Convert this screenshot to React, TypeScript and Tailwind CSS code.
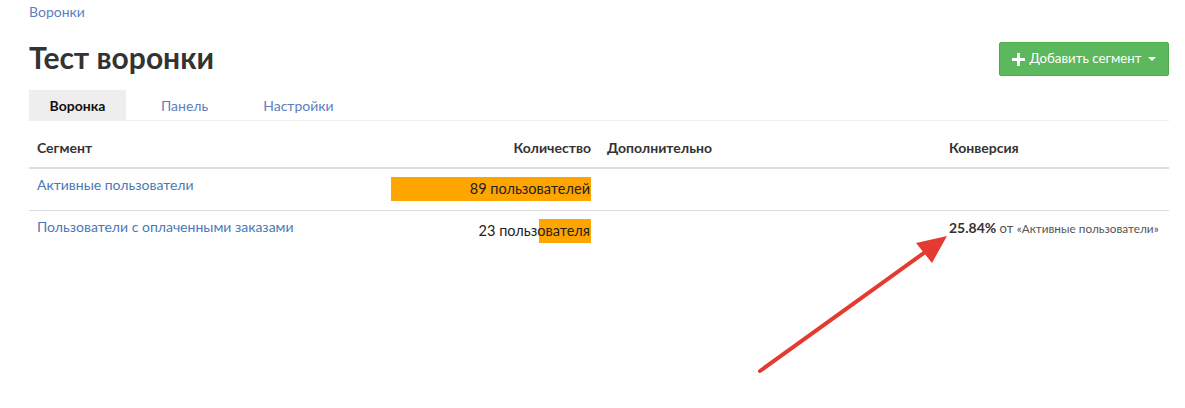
import React from 'react';

const rows = [
  { name: 'Активные пользователи', count: 89, label: '89 пользователей', conv: null as null | string },
  { name: 'Пользователи с оплаченными заказами', count: 23, label: '23 пользователя', conv: '25.84%' },
];

export default function App() {
  const max = 89;
  return (
    <div
      className="relative h-[408px] w-[1185px] bg-white text-[#333]"
      style={{ fontFamily: 'Lato, "Open Sans", sans-serif' }}
    >
      <div className="px-[29px] pr-[16px]">
        <div className="pt-[3px] text-[14px] leading-[18px] text-[#5a7fbe]">Воронки</div>

        <div className="mt-[21px] flex items-start justify-between">
          <h1 className="-mt-[3px] text-[30px] font-bold leading-[36px] text-[#333]">Тест воронки</h1>
          <button className="flex h-[34px] w-[170px] items-center justify-center gap-[4px] rounded-[2px] border border-[#4cae4c] bg-[#5cb85c] text-[13.3px] text-white">
            <svg width="13" height="13" viewBox="0 0 13 13">
              <path d="M5 0h3v5h5v3H8v5H5V8H0V5h5z" fill="white" />
            </svg>
            <span>Добавить сегмент</span>
            <svg width="8" height="5" viewBox="0 0 8 5" className="ml-[2px]">
              <path d="M0 0h8L4 4z" fill="white" />
            </svg>
          </button>
        </div>

        {/* Tabs */}
        <div className="mt-[14px] flex border-b border-[#eee] text-[14px]">
          <div className="flex h-[30px] w-[97px] items-center justify-center bg-[#eee] font-bold text-[#111]">Воронка</div>
          <div className="ml-[35px] flex h-[30px] items-center text-[#5a7fbe]">Панель</div>
          <div className="ml-[55px] flex h-[30px] items-center text-[#5a7fbe]">Настройки</div>
        </div>

        {/* Table */}
        <table className="mt-[16px] w-[1140px] table-fixed border-collapse text-[14px]">
          <colgroup>
            <col className="w-[354px]" />
            <col className="w-[216px]" />
            <col className="w-[342px]" />
            <col className="w-[228px]" />
          </colgroup>
          <thead>
            <tr className="border-b-2 border-[#ddd]">
              <th className="px-[8px] pb-[9px] pt-[1px] text-left font-bold leading-[20px]">Сегмент</th>
              <th className="px-[8px] pb-[9px] pt-[1px] text-right font-bold leading-[20px]">Количество</th>
              <th className="px-[8px] pb-[9px] pt-[1px] text-left font-bold leading-[20px]">Дополнительно</th>
              <th className="px-[8px] pb-[9px] pt-[1px] text-left font-bold leading-[20px]">Конверсия</th>
            </tr>
          </thead>
          <tbody>
            {rows.map((r, i) => (
              <tr key={r.name} className={i < rows.length - 1 ? 'border-b border-[#ddd] align-top' : 'align-top'}>
                <td className="px-[8px] pb-[9px] pt-[6px] leading-[20px] text-[#4a78b8]">{r.name}</td>
                <td className="px-[8px] pb-[9px] pt-[8px]">
                  <div className="relative h-[24px] w-full">
                    <div
                      className="absolute right-0 top-0 h-full bg-[#ffa500]"
                      style={{ width: `${(r.count / max) * 100}%` }}
                    />
                    <div className="relative pr-[1px] text-right text-[14.5px] leading-[24px] text-[#222]">{r.label}</div>
                  </div>
                </td>
                <td className="px-[8px] pb-[9px] pt-[8px]"></td>
                <td className="px-[8px] pb-[9px] pt-[7px] leading-[20px]">
                  {r.conv && (
                    <span>
                      <b className="text-[14px] text-[#333]">{r.conv}</b>
                      <span className="text-[13px] text-[#555]"> от </span>
                      <span className="text-[11.8px] text-[#555]">«Активные пользователи»</span>
                    </span>
                  )}
                </td>
              </tr>
            ))}
          </tbody>
        </table>
      </div>

      {/* Annotation arrow */}
      <svg className="pointer-events-none absolute left-0 top-0" width="1185" height="408">
        <line x1="760" y1="371" x2="928" y2="250" stroke="#e53a32" strokeWidth="4" strokeLinecap="round" />
        <polygon points="947,236 916,243 932,263" fill="#e53a32" />
      </svg>
    </div>
  );
}
